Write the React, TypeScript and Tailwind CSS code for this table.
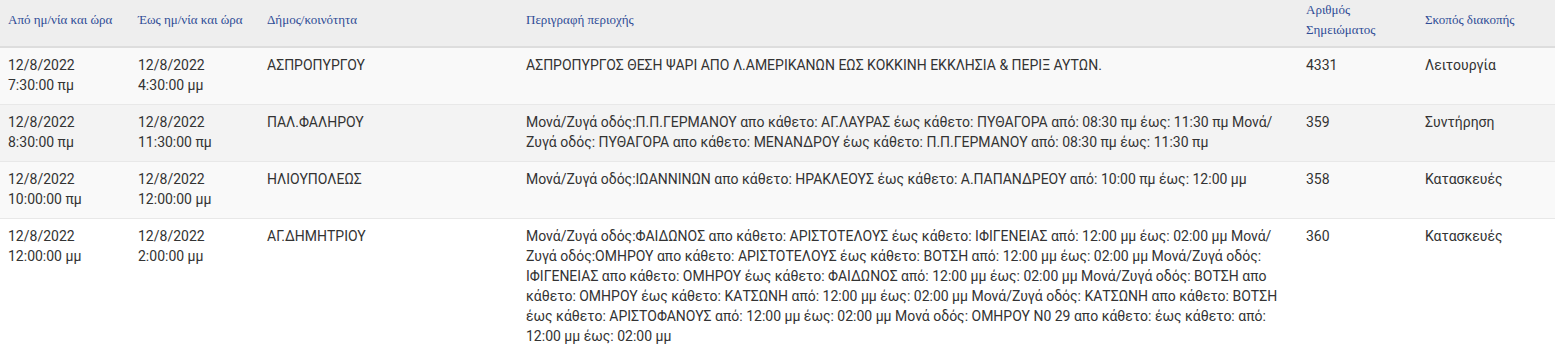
import React from "react";

type Row = {
  from: [string, string];
  to: [string, string];
  dimos: string;
  desc: string;
  num: string;
  purpose: string;
  bg: string;
};

const rows: Row[] = [
  {
    from: ["12/8/2022", "7:30:00 πμ"],
    to: ["12/8/2022", "4:30:00 μμ"],
    dimos: "ΑΣΠΡΟΠΥΡΓΟΥ",
    desc: "ΑΣΠΡΟΠΥΡΓΟΣ ΘΕΣΗ ΨΑΡΙ ΑΠΟ Λ.ΑΜΕΡΙΚΑΝΩΝ ΕΩΣ ΚΟΚΚΙΝΗ ΕΚΚΛΗΣΙΑ & ΠΕΡΙΞ ΑΥΤΩΝ.",
    num: "4331",
    purpose: "Λειτουργία",
    bg: "bg-[#f9f9f9]",
  },
  {
    from: ["12/8/2022", "8:30:00 πμ"],
    to: ["12/8/2022", "11:30:00 πμ"],
    dimos: "ΠΑΛ.ΦΑΛΗΡΟΥ",
    desc: "Μονά/Ζυγά οδός:Π.Π.ΓΕΡΜΑΝΟΥ απο κάθετο: ΑΓ.ΛΑΥΡΑΣ έως κάθετο: ΠΥΘΑΓΟΡΑ από: 08:30 πμ έως: 11:30 πμ Μονά/Ζυγά οδός: ΠΥΘΑΓΟΡΑ απο κάθετο: ΜΕΝΑΝΔΡΟΥ έως κάθετο: Π.Π.ΓΕΡΜΑΝΟΥ από: 08:30 πμ έως: 11:30 πμ",
    num: "359",
    purpose: "Συντήρηση",
    bg: "bg-[#f3f3f3]",
  },
  {
    from: ["12/8/2022", "10:00:00 πμ"],
    to: ["12/8/2022", "12:00:00 μμ"],
    dimos: "ΗΛΙΟΥΠΟΛΕΩΣ",
    desc: "Μονά/Ζυγά οδός:ΙΩΑΝΝΙΝΩΝ απο κάθετο: ΗΡΑΚΛΕΟΥΣ έως κάθετο: Α.ΠΑΠΑΝΔΡΕΟΥ από: 10:00 πμ έως: 12:00 μμ",
    num: "358",
    purpose: "Κατασκευές",
    bg: "bg-[#f9f9f9]",
  },
  {
    from: ["12/8/2022", "12:00:00 μμ"],
    to: ["12/8/2022", "2:00:00 μμ"],
    dimos: "ΑΓ.ΔΗΜΗΤΡΙΟΥ",
    desc: "Μονά/Ζυγά οδός:ΦΑΙΔΩΝΟΣ απο κάθετο: ΑΡΙΣΤΟΤΕΛΟΥΣ έως κάθετο: ΙΦΙΓΕΝΕΙΑΣ από: 12:00 μμ έως: 02:00 μμ Μονά/Ζυγά οδός:ΟΜΗΡΟΥ απο κάθετο: ΑΡΙΣΤΟΤΕΛΟΥΣ έως κάθετο: ΒΟΤΣΗ από: 12:00 μμ έως: 02:00 μμ Μονά/Ζυγά οδός: ΙΦΙΓΕΝΕΙΑΣ απο κάθετο: ΟΜΗΡΟΥ έως κάθετο: ΦΑΙΔΩΝΟΣ από: 12:00 μμ έως: 02:00 μμ Μονά/Ζυγά οδός: ΒΟΤΣΗ απο κάθετο: ΟΜΗΡΟΥ έως κάθετο: ΚΑΤΣΩΝΗ από: 12:00 μμ έως: 02:00 μμ Μονά/Ζυγά οδός: ΚΑΤΣΩΝΗ απο κάθετο: ΒΟΤΣΗ έως κάθετο: ΑΡΙΣΤΟΦΑΝΟΥΣ από: 12:00 μμ έως: 02:00 μμ Μονά οδός: ΟΜΗΡΟΥ Ν0 29 απο κάθετο: έως κάθετο: από: 12:00 μμ έως: 02:00 μμ",
    num: "360",
    purpose: "Κατασκευές",
    bg: "bg-white",
  },
];

const th =
  "text-left font-normal align-middle pl-2 pr-1 pt-0 pb-[6px] text-[13px] leading-[20px] text-[#2f4c96]";
const td = "align-top pl-2 pr-1 pt-[7px] pb-[9px] text-[14px] leading-[20px] text-[#333333]";

export default function App() {
  return (
    <div className="w-[1557px] h-[350px] overflow-hidden bg-white">
      <table
        className="table-fixed border-collapse w-[1555px]"
        style={{ fontFamily: "Roboto, 'Noto Sans', sans-serif" }}
      >
        <colgroup>
          <col className="w-[130px]" />
          <col className="w-[129px]" />
          <col className="w-[259px]" />
          <col className="w-[780px]" />
          <col className="w-[119px]" />
          <col className="w-[138px]" />
        </colgroup>
        <thead>
          <tr
            className="bg-[#eeeeee] border-b-2 border-[#dddddd] h-[45px]"
            style={{ fontFamily: "'Liberation Serif', 'DejaVu Serif', serif" }}
          >
            <th className={th}>Από ημ/νία και ώρα</th>
            <th className={th}>Έως ημ/νία και ώρα</th>
            <th className={th}>Δήμος/κοινότητα</th>
            <th className={th}>Περιγραφή περιοχής</th>
            <th className={th}>
              Αριθμός
              <br />
              Σημειώματος
            </th>
            <th className={th}>Σκοπός διακοπής</th>
          </tr>
        </thead>
        <tbody>
          {rows.map((r, i) => (
            <tr key={i} className={`${r.bg} border-b border-[#e8e8e8]`}>
              <td className={td}>
                {r.from[0]}
                <br />
                {r.from[1]}
              </td>
              <td className={td}>
                {r.to[0]}
                <br />
                {r.to[1]}
              </td>
              <td className={td}>{r.dimos}</td>
              <td className={td}>{r.desc}</td>
              <td className={td}>{r.num}</td>
              <td className={td}>{r.purpose}</td>
            </tr>
          ))}
        </tbody>
      </table>
    </div>
  );
}
